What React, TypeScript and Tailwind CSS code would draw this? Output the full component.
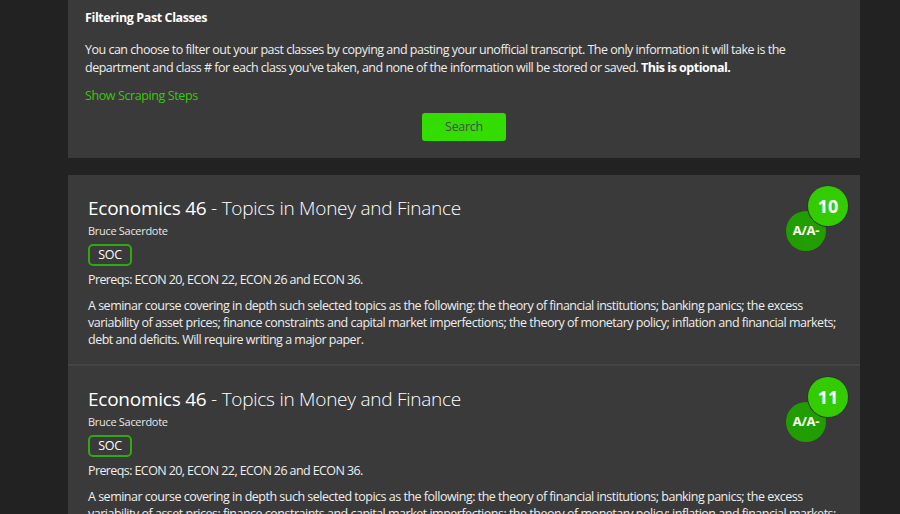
const courses = [
  { rank: 10, grade: "A/A-" },
  { rank: 11, grade: "A/A-" },
];

const font = { fontFamily: '"Open Sans", "Liberation Sans", sans-serif' };

function Badges({ rank, grade }: { rank: number; grade: string }) {
  return (
    <div className="absolute right-[12px] top-[11px] h-[66px] w-[62px]">
      <div className="absolute left-0 top-[25px] flex h-[40px] w-[40px] items-center justify-center rounded-full bg-[#229d00] text-[13px] font-bold tracking-[-0.3px] text-white">
        {grade}
      </div>
      <div className="absolute right-0 top-0 flex h-[40px] w-[40px] items-center justify-center rounded-full bg-[#33cc00] text-[18px] font-bold text-white ring-1 ring-[#2e3a2a]">
        {rank}
      </div>
    </div>
  );
}

function Course({ rank, grade }: { rank: number; grade: string }) {
  return (
    <div className="relative border-b-2 border-[#444444] px-[20px] pb-[16px] pt-[19px]">
      <Badges rank={rank} grade={grade} />
      <h2 className="text-[19px] leading-[28px] tracking-[-0.25px] text-white">
        <span className="font-normal">Economics 46</span>
        <span className="font-light"> - Topics in Money and Finance</span>
      </h2>
      <p className="mt-[1px] text-[11px] leading-[16px] tracking-[-0.3px] text-[#e6e6e6]">
        Bruce Sacerdote
      </p>
      <div className="mt-[5px] inline-flex h-[22px] w-[44px] items-center justify-center rounded-[5px] border-2 border-[#2eaa10] text-[12.5px] tracking-[-0.3px] text-white">
        SOC
      </div>
      <p className="mt-[5px] text-[12.5px] leading-[18px] tracking-[-0.6px] text-[#eeeeee]">
        Prereqs: ECON 20, ECON 22, ECON 26 and ECON 36.
      </p>
      <p className="mt-[8px] text-[12.5px] leading-[17px] tracking-[-0.5px] text-[#eeeeee]">
        A seminar course covering in depth such selected topics as the following: the theory of
        financial institutions; banking panics; the excess variability of asset prices; finance
        constraints and capital market imperfections; the theory of monetary policy; inflation and
        financial markets; debt and deficits. Will require writing a major paper.
      </p>
    </div>
  );
}

export default function App() {
  return (
    <div className="h-[514px] overflow-hidden bg-[#222222] pl-[68px] pr-[40px] text-white" style={font}>
      <div className="bg-[#3a3a3a] px-[17px] pb-[17px] pt-[9px]">
        <h3 className="text-[12.5px] font-bold leading-[18px] tracking-[-0.4px]">
          Filtering Past Classes
        </h3>
        <p className="mt-[14px] text-[12.5px] leading-[18px] tracking-[-0.5px] text-[#eeeeee]">
          You can choose to filter out your past classes by copying and pasting your unofficial
          transcript. The only information it will take is the department and class # for each
          class you've taken, and none of the information will be stored or saved.{" "}
          <b className="text-white">This is optional.</b>
        </p>
        <p className="mt-[10px] text-[12.5px] leading-[18px] tracking-[-0.4px] text-[#33cc00]">
          Show Scraping Steps
        </p>
        <div className="mt-[8px] flex justify-center">
          <button className="h-[28px] w-[84px] rounded-[3px] bg-[#33dd00] text-[12.5px] tracking-[-0.3px] text-[#4a4a4a]">
            Search
          </button>
        </div>
      </div>
      <div className="mt-[17px] bg-[#3a3a3a]">
        {courses.map((c) => (
          <Course key={c.rank} rank={c.rank} grade={c.grade} />
        ))}
      </div>
    </div>
  );
}
